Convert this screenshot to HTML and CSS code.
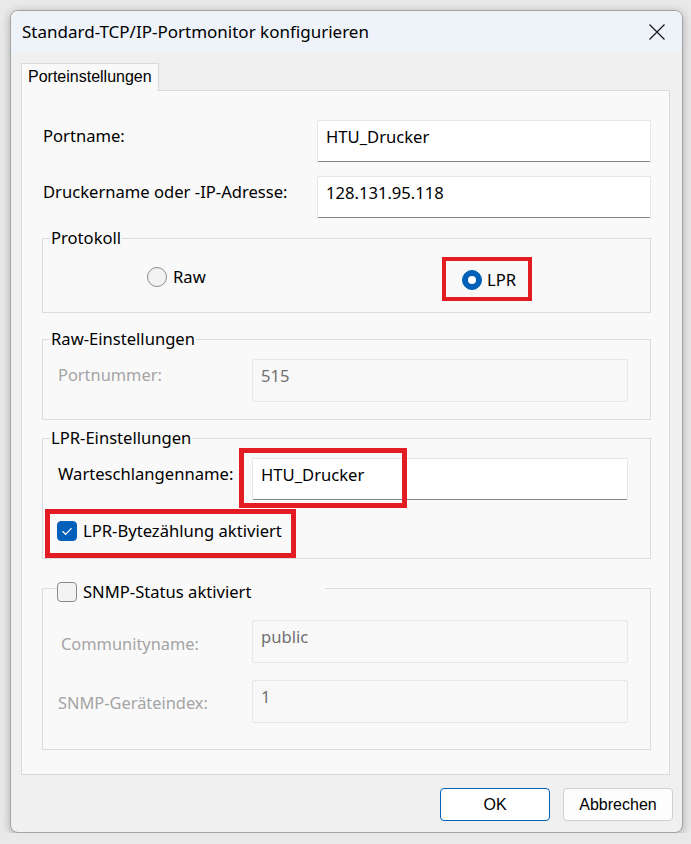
FILE: index.html
```html
<!DOCTYPE html>
<html lang="de">
<head>
<meta charset="utf-8">
<title>Standard-TCP/IP-Portmonitor konfigurieren</title>
<link rel="stylesheet" href="styles.css">
</head>
<body>
<div class="window">
  <div class="titlebar">
    <span class="title">Standard-TCP/IP-Portmonitor konfigurieren</span>
    <svg class="close" width="18" height="18" viewBox="0 0 18 18"><path d="M1.5 1.5 L16.5 16.5 M16.5 1.5 L1.5 16.5" stroke="#1b1b1b" stroke-width="1.3" fill="none"/></svg>
  </div>
  <div class="client">
    <div class="tabs"><div class="tab">Porteinstellungen</div></div>
    <div class="panel">
      <div class="row">
        <span class="label">Portname:</span>
        <div class="input">HTU_Drucker</div>
      </div>
      <div class="row row-2">
        <span class="label">Druckername oder -IP-Adresse:</span>
        <div class="input">128.131.95.118</div>
      </div>

      <fieldset class="group group-proto">
        <legend class="legend">Protokoll</legend>
        <div class="radios">
          <div class="radio-item"><span class="radio"></span><span>Raw</span></div>
          <div class="radio-item radio-lpr"><span class="radio checked"></span><span>LPR</span></div>
        </div>
      </fieldset>

      <fieldset class="group group-raw">
        <legend class="legend">Raw-Einstellungen</legend>
        <div class="inner">
          <span class="label dis">Portnummer:</span>
          <div class="input disabled">515</div>
        </div>
      </fieldset>

      <fieldset class="group group-lpr">
        <legend class="legend">LPR-Einstellungen</legend>
        <div class="inner">
          <span class="label">Warteschlangenname:</span>
          <div class="input short">HTU_Drucker</div>
        </div>
        <div class="check-row">
          <span class="checkbox checked"><svg width="20" height="20" viewBox="0 0 20 20"><path d="M5.5 10.3 L8.6 13.3 L14.6 7.2" stroke="#fff" stroke-width="1.2" fill="none"/></svg></span>
          <span>LPR-Bytezählung aktiviert</span>
        </div>
      </fieldset>

      <fieldset class="group group-snmp">
        <legend class="legend legend-check"><span class="checkbox"></span><span>SNMP-Status aktiviert</span></legend>
        <div class="inner inner-comm">
          <span class="label dis lab-comm">Communityname:</span>
          <div class="input disabled">public</div>
        </div>
        <div class="inner inner-idx">
          <span class="label dis lab-idx">SNMP-Geräteindex:</span>
          <div class="input disabled">1</div>
        </div>
      </fieldset>
    </div>
    <div class="footer">
      <button class="btn btn-default">OK</button>
      <button class="btn">Abbrechen</button>
    </div>
  </div>
  <div class="mark mark-lpr"></div>
  <div class="mark mark-queue"></div>
  <div class="mark mark-check"></div>
</div>
</body>
</html>
```

FILE: styles.css
```css
* { box-sizing: border-box; }
html, body { margin: 0; }
body {
  background: #e9e9e9;
  padding: 10px 0 0 10px;
  font-family: "Noto Sans", "Open Sans", sans-serif;
  font-size: 16.6px;
  color: #000;
}
.window {
  position: relative;
  width: 673px;
  height: 823px;
  border: 1px solid #a3a3a3;
  border-radius: 8px;
  background: #f0f0f0;
  overflow: hidden;
  box-shadow: 0 2px 10px rgba(0,0,0,0.28);
  display: flex;
  flex-direction: column;
}
.titlebar {
  height: 42px;
  flex: none;
  background: #eef3f9;
  display: flex;
  align-items: center;
  justify-content: space-between;
  padding: 0 16px 0 11px;
}
.title { font-size: 17px; line-height: 20px; margin-top: -1px; }
.close { display: block; }
.client {
  flex: 1;
  display: flex;
  flex-direction: column;
  padding: 10px 0 0 10px;
}
.tabs { display: flex; }
.tab {
  position: relative;
  z-index: 1;
  width: 138px;
  height: 28px;
  margin-bottom: -1px;
  background: #f9f9f9;
  border: 1px solid #d9d9d9;
  border-bottom: none;
  padding: 3px 0 0 6px;
  font-family: "Liberation Sans", Arial, sans-serif;
  font-size: 16px;
  line-height: 20px;
}
.panel {
  width: 649px;
  height: 685px;
  background: #f9f9f9;
  border: 1px solid #dadada;
  padding: 29px 18px 0 20px;
  display: flex;
  flex-direction: column;
}
.row {
  display: grid;
  grid-template-columns: 275px 334px;
  align-items: start;
}
.row-2 { margin-top: 14px; }
.label { padding: 6px 0 0 1px; line-height: 20px; white-space: nowrap; }
.input {
  height: 42px;
  background: #fff;
  border: 1px solid #e6e6e6;
  border-bottom: 1px solid #868686;
  border-radius: 2px;
  padding: 6px 8px 0 8px;
  line-height: 20px;
  white-space: nowrap;
}
.input.disabled {
  height: 43px;
  background: #f8f8f8;
  border: 1px solid #e7e7e7;
  color: #707070;
}
.dis { color: #a4a4a4; font-size: 16.4px; }

.group {
  margin: 0;
  padding: 0;
  border: 1px solid #dcdcdc;
  min-width: 0;
}
.legend {
  margin-left: 7px;
  padding: 0 1px;
  line-height: 20px;
  height: 20px;
}
.group-proto { margin-top: 10px; padding: 19px 0 22px 0; }
.radios {
  display: grid;
  grid-template-columns: 315px auto;
  padding-left: 104px;
  align-items: start;
}
.radio-item { display: flex; align-items: center; gap: 6px; line-height: 20px; }
.radio-lpr { margin-top: 3px; gap: 5px; }
.radio {
  width: 20px;
  height: 20px;
  border-radius: 50%;
  border: 1px solid #8a8a8a;
  background: #f3f3f3;
  display: flex;
  align-items: center;
  justify-content: center;
}
.radio.checked { background: #005fb8; border-color: #005fb8; }
.radio.checked::after {
  content: "";
  width: 8px;
  height: 8px;
  border-radius: 50%;
  background: #fff;
}

.inner {
  display: grid;
  grid-template-columns: 195px 376px;
  padding-left: 14px;
  align-items: start;
}
.group-raw { margin-top: 16px; padding: 10px 0 17px 0; }
.group-lpr { margin-top: 8px; padding: 10px 0 17px 0; }
.check-row {
  display: flex;
  align-items: center;
  gap: 6px;
  padding-left: 14px;
  margin-top: 21px;
  line-height: 20px;
}
.checkbox {
  width: 20px;
  height: 20px;
  border-radius: 4px;
  border: 1px solid #8a8a8a;
  background: #f3f3f3;
  display: block;
  flex: none;
}
.checkbox.checked { background: #005fb8; border-color: #005fb8; }
.checkbox svg { display: block; margin: -1px; }

.group-snmp { margin-top: 15px; padding: 18px 0 26px 0; }
.legend-check {
  margin-left: 14px;
  padding: 8px 0 0 0;
  height: 28px;
  width: 268px;
  display: flex;
  align-items: center;
  gap: 6px;
}
.inner-idx { margin-top: 17px; }
.lab-comm { padding: 14px 0 0 4px; }
.lab-idx { padding: 13px 0 0 1px; }

.footer {
  display: flex;
  justify-content: flex-end;
  gap: 13px;
  padding: 13px 9px 0 0;
  margin-left: -10px;
}
.btn {
  width: 110px;
  height: 33px;
  background: #fdfdfd;
  border: 1px solid #d0d0d0;
  border-radius: 4px;
  font-family: "Liberation Sans", Arial, sans-serif;
  font-size: 16px;
  color: #000;
  padding: 0;
}
.btn-default { border-color: #005fb8; background: #fff; }

.mark {
  position: absolute;
  border: 5px solid #e31b23;
}
.mark-lpr { left: 431px; top: 246px; width: 90px; height: 44px; border-width: 4px; }
.mark-queue { left: 228px; top: 437px; width: 168px; height: 60px; }
.mark-check { left: 34px; top: 498px; width: 251px; height: 49px; }
```
